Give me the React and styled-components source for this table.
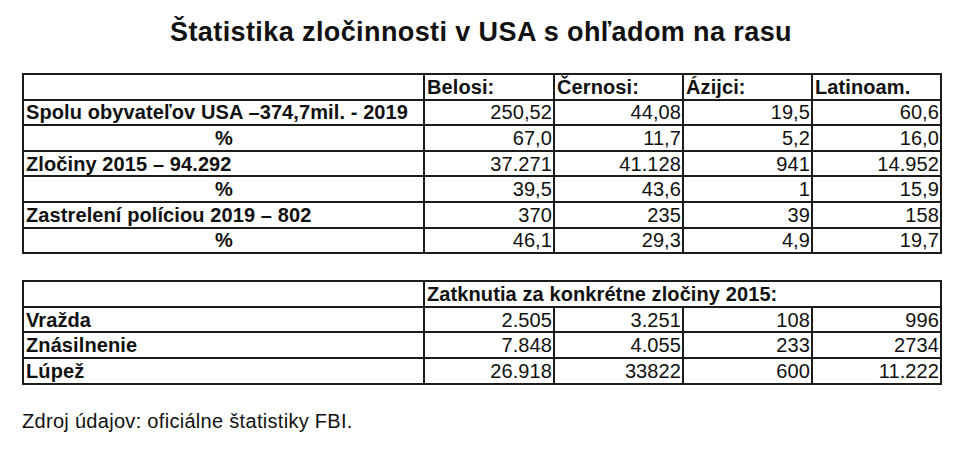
import React from "react";
import styled, { createGlobalStyle } from "styled-components";

const Global = createGlobalStyle`
  html, body { margin: 0; padding: 0; background: #fff; }
  body { font-family: "Liberation Sans", Arial, sans-serif; color: #111; }
`;

const Page = styled.div`
  width: 970px;
  height: 469px;
  box-sizing: border-box;
  padding: 14px 30px 0 22px;
  display: flex;
  flex-direction: column;
`;

const Title = styled.h1`
  margin: 0;
  width: 918px;
  text-align: center;
  font-size: 27px;
  letter-spacing: 0.4px;
  font-weight: bold;
  line-height: 36px;
`;

const Table = styled.table`
  width: 918px;
  border-collapse: collapse;
  table-layout: fixed;
  margin-top: ${(p) => p.$mt}px;
  font-size: 20px;
  letter-spacing: 0.1px;
  border: 2px solid #1c1c1c;
`;

const Row = styled.tr`
  height: 25.6px;
`;

const Cell = styled.td`
  border: 2px solid #1c1c1c;
  padding: 0 1px 0 2px;
  line-height: 20px;
  white-space: nowrap;
  overflow: visible;
  font-weight: ${(p) => (p.$bold ? "bold" : "normal")};
  text-align: ${(p) => p.$align || "left"};
  vertical-align: middle;
`;

const Footer = styled.p`
  margin: 25px 0 0 0;
  font-size: 20px;
  letter-spacing: 0.3px;
  line-height: 22px;
`;

const cols = [401, 130, 129, 129, 129];

const Cols = () => (
  <colgroup>
    {cols.map((w, i) => (
      <col key={i} style={{ width: w }} />
    ))}
  </colgroup>
);

const stats = [
  { label: "Spolu obyvateľov USA –374,7mil. - 2019", values: ["250,52", "44,08", "19,5", "60,6"] },
  { label: "%", center: true, values: ["67,0", "11,7", "5,2", "16,0"] },
  { label: "Zločiny 2015 – 94.292", values: ["37.271", "41.128", "941", "14.952"] },
  { label: "%", center: true, values: ["39,5", "43,6", "1", "15,9"] },
  { label: "Zastrelení políciou 2019 – 802", values: ["370", "235", "39", "158"] },
  { label: "%", center: true, values: ["46,1", "29,3", "4,9", "19,7"] },
];

const arrests = [
  { label: "Vražda", values: ["2.505", "3.251", "108", "996"] },
  { label: "Znásilnenie", values: ["7.848", "4.055", "233", "2734"] },
  { label: "Lúpež", values: ["26.918", "33822", "600", "11.222"] },
];

const headers = ["Belosi:", "Černosi:", "Ázijci:", "Latinoam."];

export default function App() {
  return (
    <>
      <Global />
      <Page>
        <Title>Štatistika zločinnosti v USA s ohľadom na rasu</Title>
        <Table $mt={23}>
          <Cols />
          <tbody>
            <Row>
              <Cell />
              {headers.map((h) => (
                <Cell key={h} $bold>
                  {h}
                </Cell>
              ))}
            </Row>
            {stats.map((r, i) => (
              <Row key={i}>
                <Cell $bold $align={r.center ? "center" : "left"}>
                  {r.label}
                </Cell>
                {r.values.map((v, j) => (
                  <Cell key={j} $align="right">
                    {v}
                  </Cell>
                ))}
              </Row>
            ))}
          </tbody>
        </Table>
        <Table $mt={26}>
          <Cols />
          <tbody>
            <Row>
              <Cell />
              <Cell $bold colSpan={4}>
                Zatknutia za konkrétne zločiny 2015:
              </Cell>
            </Row>
            {arrests.map((r, i) => (
              <Row key={i}>
                <Cell $bold>{r.label}</Cell>
                {r.values.map((v, j) => (
                  <Cell key={j} $align="right">
                    {v}
                  </Cell>
                ))}
              </Row>
            ))}
          </tbody>
        </Table>
        <Footer>Zdroj údajov: oficiálne štatistiky FBI.</Footer>
      </Page>
    </>
  );
}
